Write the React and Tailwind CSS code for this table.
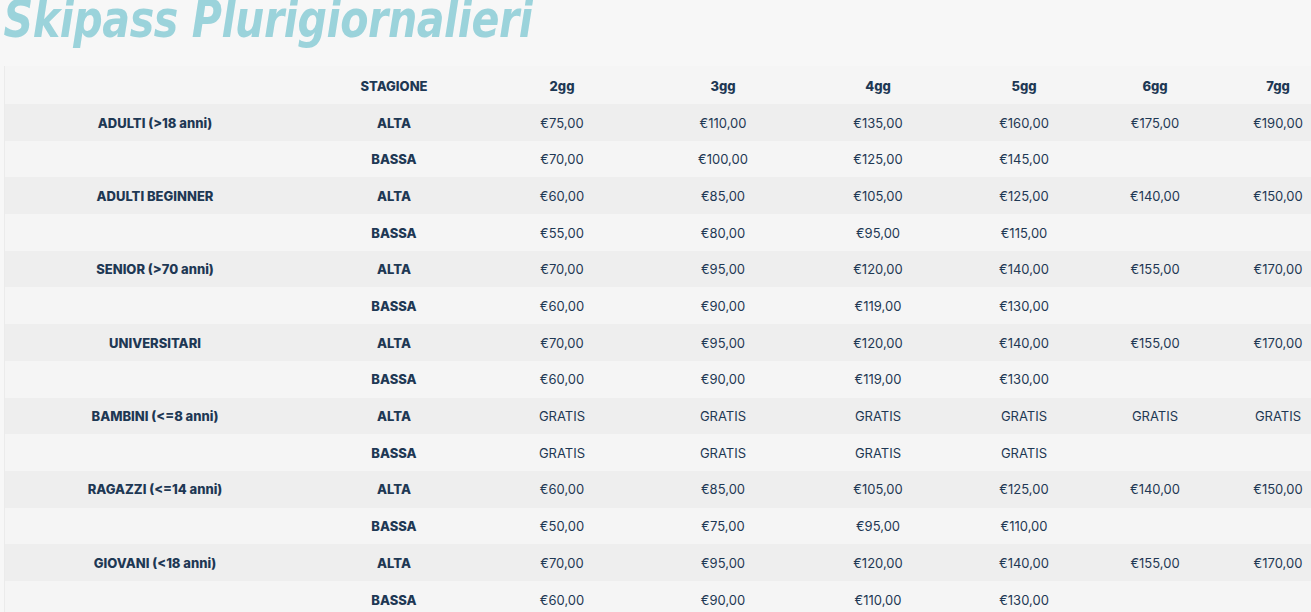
import React from "react";

const cols = ["w-[300px]", "w-[178px]", "w-[158px]", "w-[164px]", "w-[146px]", "w-[146px]", "w-[116px]", "w-[130px]"];

const days = ["2gg", "3gg", "4gg", "5gg", "6gg", "7gg"];

const rows = [
  { label: "ADULTI (>18 anni)", alta: ["€75,00", "€110,00", "€135,00", "€160,00", "€175,00", "€190,00"], bassa: ["€70,00", "€100,00", "€125,00", "€145,00"] },
  { label: "ADULTI BEGINNER", alta: ["€60,00", "€85,00", "€105,00", "€125,00", "€140,00", "€150,00"], bassa: ["€55,00", "€80,00", "€95,00", "€115,00"] },
  { label: "SENIOR (>70 anni)", alta: ["€70,00", "€95,00", "€120,00", "€140,00", "€155,00", "€170,00"], bassa: ["€60,00", "€90,00", "€119,00", "€130,00"] },
  { label: "UNIVERSITARI", alta: ["€70,00", "€95,00", "€120,00", "€140,00", "€155,00", "€170,00"], bassa: ["€60,00", "€90,00", "€119,00", "€130,00"] },
  { label: "BAMBINI (<=8 anni)", alta: ["GRATIS", "GRATIS", "GRATIS", "GRATIS", "GRATIS", "GRATIS"], bassa: ["GRATIS", "GRATIS", "GRATIS", "GRATIS"] },
  { label: "RAGAZZI (<=14 anni)", alta: ["€60,00", "€85,00", "€105,00", "€125,00", "€140,00", "€150,00"], bassa: ["€50,00", "€75,00", "€95,00", "€110,00"] },
  { label: "GIOVANI (<18 anni)", alta: ["€70,00", "€95,00", "€120,00", "€140,00", "€155,00", "€170,00"], bassa: ["€60,00", "€90,00", "€110,00", "€130,00"] },
];

const PriceRow = ({ label, season, prices, shaded }) => (
  <tr className={shaded ? "h-[36.7px] bg-[#eeeeee]" : "h-[36.7px] bg-[#f5f5f5]"}>
    <td className="p-0 pt-[2px] text-center font-extrabold">{label}</td>
    <td className="p-0 pt-[2px] text-center font-extrabold">{season}</td>
    {[0, 1, 2, 3, 4, 5].map((i) => (
      <td key={i} className="p-0 pt-[2px] text-center">
        {prices[i] || ""}
      </td>
    ))}
  </tr>
);

export default function App() {
  return (
    <div className="min-h-screen w-full overflow-hidden bg-[#f7f7f7]">
      <div className="h-[66px] overflow-hidden">
        <h1 className="pl-[4px] -mt-[7px] origin-left scale-x-[0.88] text-[52px] leading-none italic font-bold tracking-[-0.5px] text-[#9bd3db] font-['DejaVu_Sans_Condensed','DejaVu_Sans',sans-serif] font-stretch-condensed whitespace-nowrap">
          Skipass Plurigiornalieri
        </h1>
      </div>
      <div className="ml-[4px] border-l border-[#ebebeb] bg-[#f5f5f5]">
        <table className="table-fixed border-collapse w-[1338px] text-[13px] text-[#1e3854] font-['Inter',sans-serif]">
          <colgroup>
            {cols.map((c, i) => (
              <col key={i} className={c} />
            ))}
          </colgroup>
          <thead>
            <tr className="h-[38px]">
              <th className="p-0 pt-[3px]"></th>
              <th className="p-0 pt-[3px] text-center font-extrabold">STAGIONE</th>
              {days.map((d) => (
                <th key={d} className="p-0 pt-[3px] text-center font-extrabold">
                  {d}
                </th>
              ))}
            </tr>
          </thead>
          <tbody>
            {rows.map((r) => (
              <React.Fragment key={r.label}>
                <PriceRow label={r.label} season="ALTA" prices={r.alta} shaded />
                <PriceRow label="" season="BASSA" prices={r.bassa} />
              </React.Fragment>
            ))}
          </tbody>
        </table>
      </div>
    </div>
  );
}
